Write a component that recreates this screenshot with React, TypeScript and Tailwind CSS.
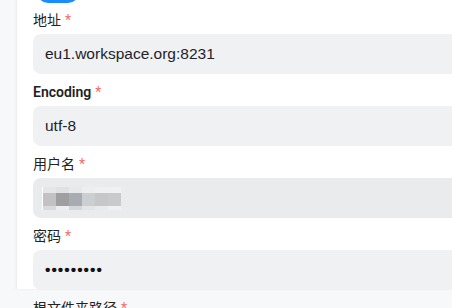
import React from 'react';

const labelFont = "font-['Roboto','Noto_Sans_CJK_SC',sans-serif]";
const valueFont = "font-['Liberation_Sans','Noto_Sans_CJK_SC',sans-serif]";

function Label({ text, bold = false }: { text: string; bold?: boolean }) {
  return (
    <div className={`${labelFont} h-5 text-sm leading-5 text-[#222] ${bold ? 'font-semibold' : ''}`}>
      {text}
      <span className="ml-1 text-[#f56c6c] font-normal">*</span>
    </div>
  );
}

function Field({ label, bold, children, bg = 'bg-[#f0f1f3]' }: { label: string; bold?: boolean; children: React.ReactNode; bg?: string }) {
  return (
    <div className="flex flex-col gap-1">
      <Label text={label} bold={bold} />
      <div className={`flex h-10 w-[560px] items-center rounded-lg ${bg} px-3`}>{children}</div>
    </div>
  );
}

const blurTop = ['#e4e6e8', '#dfe1e3', '#e6e8ea', '#eceeef', '#eef0f1', '#f0f1f2'];
const blurMid = ['#c2c2c4', '#9f9fa1', '#a8acb2', '#cbcfd1', '#c5c7c9', '#c8cacc'];
const blurBot = ['#dadadc', '#eeeeee', '#d5d6d9', '#e4e5e7', '#e9eaec', '#f0f0f1'];

function Mosaic() {
  return (
    <div className="ml-[-3px] flex border-l border-white">
      {blurMid.map((c, i) => (
        <div key={i} className="flex w-[13px] flex-col">
          <div className="h-[6px]" style={{ background: blurTop[i] }} />
          <div className="h-[13px]" style={{ background: c }} />
          <div className="h-[4px]" style={{ background: blurBot[i] }} />
        </div>
      ))}
    </div>
  );
}

export default function App() {
  return (
    <div className="h-[308px] w-[452px] overflow-hidden bg-[#f7f8f9]">
      <div className="ml-[17px] h-full bg-white pl-4 shadow-[-1px_0_3px_rgba(0,0,0,0.06)]">
        <div className="-mt-[19px] ml-[4px] h-[22px] w-[42px] rounded-full bg-[#1a8cff]" />
        <div className="mt-[7px] flex flex-col gap-2">
          <Field label="地址">
            <span className={`${valueFont} text-[15.5px] text-[#1f2329]`}>eu1.workspace.org:8231</span>
          </Field>
          <Field label="Encoding" bold>
            <span className={`${valueFont} text-[15.5px] text-[#1f2329]`}>utf-8</span>
          </Field>
          <Field label="用户名" bg="bg-[#eaebed]">
            <Mosaic />
          </Field>
          <Field label="密码">
            <span className={`${valueFont} text-[15.5px] font-bold tracking-[1px] text-[#111]`}>•••••••••</span>
          </Field>
          <Label text="根文件夹路径" />
        </div>
      </div>
    </div>
  );
}
